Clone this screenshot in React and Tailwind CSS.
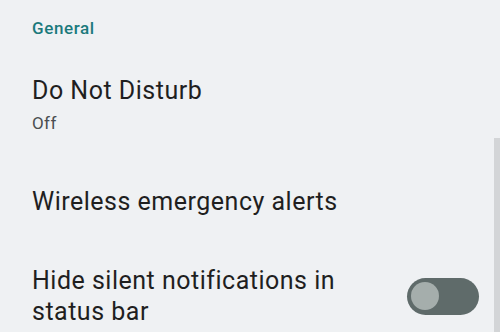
import React from 'react';

const Toggle = ({ on }) => (
    <div className={`w-[72px] h-[37px] rounded-full flex items-center px-[4px] shrink-0 ${on ? 'bg-[#1b7a7c] justify-end' : 'bg-[#5f6b6a]'}`}>
        <div className="w-[28px] h-[28px] rounded-full bg-[#a5aeac]" />
    </div>
);

export default function App() {
    return (
        <div
            className="relative w-[500px] h-[332px] overflow-hidden bg-[#eff1f3] text-[#1f1f1f]"
            style={{ fontFamily: 'Roboto, "Noto Sans", sans-serif' }}
        >
            <div className="pl-[32px] pr-[21px]">
                {/* Section header */}
                <div className="pt-[16px] text-[17px] leading-[24px] font-medium tracking-[0.6px] text-[#1b7a7c]">General</div>

                {/* Do Not Disturb */}
                <div className="mt-[35px]">
                    <div className="text-[25px] leading-[32px] tracking-[0.5px]">Do Not Disturb</div>
                    <div className="mt-[4px] text-[17px] leading-[24px] tracking-[0.4px] text-[#4a4e50]">Off</div>
                </div>

                {/* Wireless emergency alerts */}
                <div className="mt-[51px] text-[25px] leading-[32px] tracking-[0.5px]">Wireless emergency alerts</div>

                {/* Hide silent notifications */}
                <div className="mt-[47px] flex items-center justify-between gap-4">
                    <div className="text-[25px] leading-[31px] tracking-[0.5px] w-[330px]">
                        Hide silent notifications in status bar
                    </div>
                    <Toggle on={false} />
                </div>
            </div>

            {/* scrollbar */}
            <div className="absolute right-0 top-[138px] bottom-0 w-[6px] bg-[#d3d5d7]" />
        </div>
    );
}
